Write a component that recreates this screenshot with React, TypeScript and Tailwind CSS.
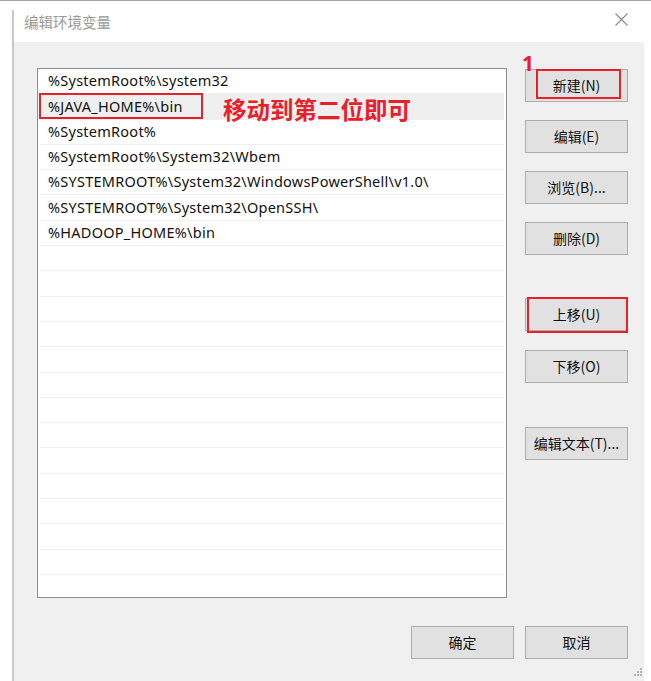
import React from "react";

const paths = [
  "%SystemRoot%\\system32",
  "%JAVA_HOME%\\bin",
  "%SystemRoot%",
  "%SystemRoot%\\System32\\Wbem",
  "%SYSTEMROOT%\\System32\\WindowsPowerShell\\v1.0\\",
  "%SYSTEMROOT%\\System32\\OpenSSH\\",
  "%HADOOP_HOME%\\bin",
];

const rows = Array.from({ length: 21 }, (_, i) => paths[i] ?? "");

const font = {
  fontFamily: '"Noto Sans", "Noto Sans CJK SC", sans-serif',
};

function Btn({ label, className = "" }: { label: string; className?: string }) {
  return (
    <button
      className={
        "flex h-[33px] w-[103px] items-center justify-center border border-[#adadad] bg-[#e1e1e1] text-[14px] text-[#111] " +
        className
      }
    >
      {label}
    </button>
  );
}

export default function App() {
  return (
    <div
      className="flex h-[681px] w-[651px] flex-col overflow-hidden border-t border-[#a3a3a3] bg-white"
      style={font}
    >
      <div className="flex flex-1">
        <div className="w-[12px] bg-white" />
        <div className="mt-[9px] w-[2px] bg-[#c9c9c9]" />
        <div className="flex w-[630px] flex-col">
          {/* title bar */}
          <div className="flex h-[41px] items-center justify-between bg-white pl-[10px] pr-[16px]">
            <span className="text-[14.5px] text-[#999]" style={{ fontFamily: '"Noto Sans CJK SC", sans-serif' }}>
              编辑环境变量
            </span>
            <svg width="13" height="13" viewBox="0 0 13 13" className="mb-[4px]">
              <path d="M0.5 0.5 L12.5 12.5 M12.5 0.5 L0.5 12.5" stroke="#8a8a8a" strokeWidth="1.1" />
            </svg>
          </div>

          {/* content */}
          <div className="relative flex flex-1 flex-col bg-[#f0f0f0] pl-[23px] pr-[16px] pt-[26px]">
            <div className="flex">
              <div className="h-[530px] w-[470px] overflow-hidden border border-[#8c8f96] bg-white">
                {rows.map((r, i) => (
                  <div
                    key={i}
                    className={
                      "relative mx-[2px] flex h-[25.3px] items-center border-b border-[#f0f0f0] pl-[8px] text-[14.5px] tracking-[0.25px] text-[#111] " +
                      (i === 1 ? "bg-[#efefef]" : "")
                    }
                  >
                    <span className="whitespace-nowrap">{r}</span>
                    {i === 1 && (
                      <>
                        <div className="absolute left-[-1px] top-[-1px] h-[26px] w-[164px] border-2 border-[#e8202a]" />
                        <span
                          className="absolute left-[183px] top-[-2px] whitespace-nowrap text-[23.5px] font-bold tracking-normal text-[#e8202a]"
                          style={{ fontFamily: '"Noto Sans CJK SC", sans-serif' }}
                        >
                          移动到第二位即可
                        </span>
                      </>
                    )}
                  </div>
                ))}
              </div>

              <div className="ml-[18px] flex flex-col" style={{ fontFamily: '"Noto Sans CJK SC", sans-serif' }}>
                <div className="relative mt-[1px]">
                  <Btn label="新建(N)" />
                  <div className="absolute left-[11px] top-0 h-[30px] w-[85px] border-2 border-[#e8202a]" />
                  <span
                    className="absolute left-[-3px] top-[-16px] text-[21px] font-bold leading-none text-[#e8202a]"
                    style={{ fontFamily: '"Noto Sans", sans-serif' }}
                  >
                    1
                  </span>
                </div>
                <Btn label="编辑(E)" className="mt-[18px]" />
                <Btn label="浏览(B)..." className="mt-[18px]" />
                <Btn label="删除(D)" className="mt-[18px]" />
                <div className="relative mt-[43px]">
                  <Btn label="上移(U)" />
                  <div className="absolute left-[2px] top-[-1px] h-[36px] w-[101px] border-2 border-[#e8202a]" />
                </div>
                <Btn label="下移(O)" className="mt-[19px]" />
                <Btn label="编辑文本(T)..." className="mt-[44px]" />
              </div>
            </div>

            <div
              className="mt-[28px] flex justify-end gap-[11px]"
              style={{ fontFamily: '"Noto Sans CJK SC", sans-serif' }}
            >
              <Btn label="确定" />
              <Btn label="取消" />
            </div>

            <svg width="8" height="8" viewBox="0 0 8 8" className="absolute bottom-[5px] right-[2px]">
              <rect x="6" y="0" width="2" height="2" fill="#b5b5b5" />
              <rect x="3" y="3" width="2" height="2" fill="#b5b5b5" />
              <rect x="6" y="3" width="2" height="2" fill="#b5b5b5" />
              <rect x="0" y="6" width="2" height="2" fill="#b5b5b5" />
              <rect x="3" y="6" width="2" height="2" fill="#b5b5b5" />
              <rect x="6" y="6" width="2" height="2" fill="#b5b5b5" />
            </svg>
          </div>
        </div>
        <div className="flex-1 bg-white" />
      </div>
    </div>
  );
}
